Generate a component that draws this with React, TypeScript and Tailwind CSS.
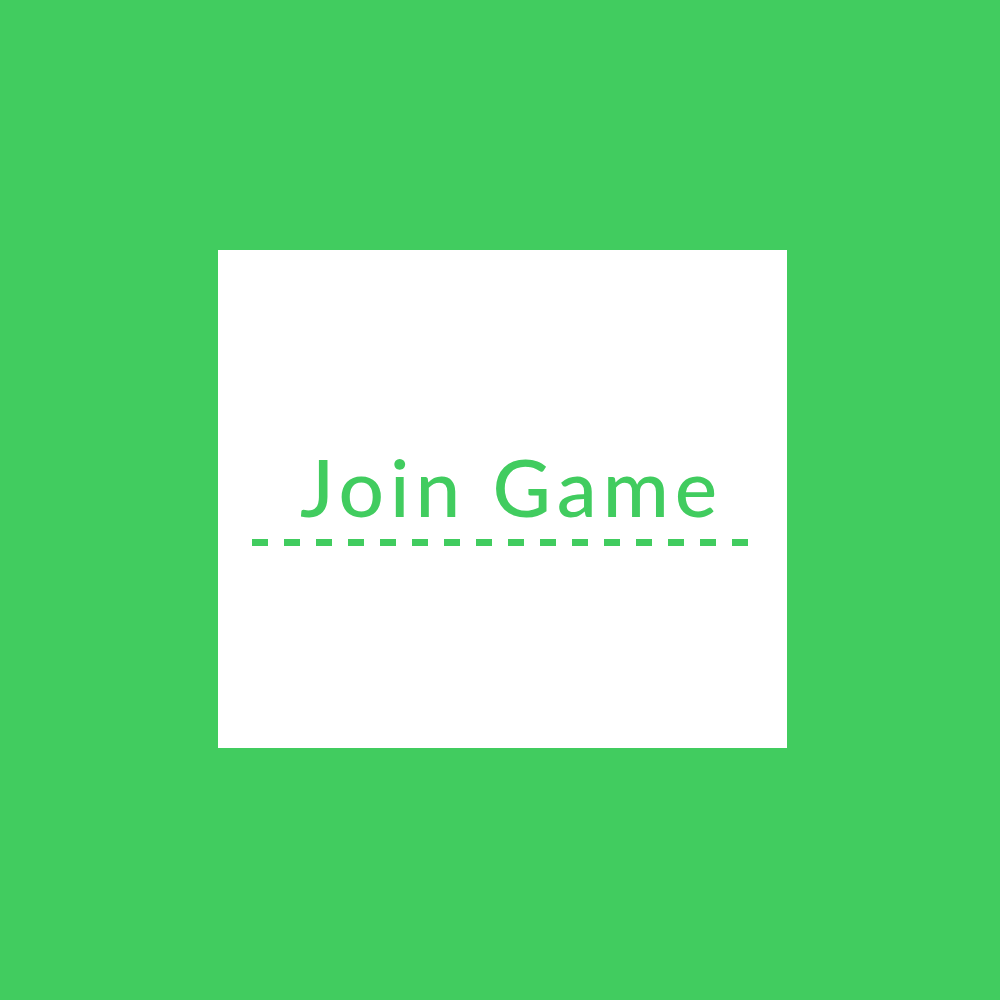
const dashes = Array.from({ length: 16 });

const App = () => {
  return (
    <div className="w-[1000px] h-[1000px] bg-[#41cc5f] pt-[250px] pl-[218px]">
      <div className="w-[569px] h-[498px] bg-white flex flex-col">
        <h1
          className="mt-[196px] ml-[82px] text-[80px] leading-none font-medium text-[#41cc5f] tracking-[6px] whitespace-nowrap"
          style={{ fontFamily: 'Lato, "Noto Sans", sans-serif' }}
        >
          Join Game
        </h1>
        <div className="mt-[13px] ml-[34px] flex gap-4">
          {dashes.map((_, i) => (
            <div key={i} className="w-4 h-[7px] bg-[#41cc5f]" />
          ))}
        </div>
      </div>
    </div>
  );
};

export default App;
